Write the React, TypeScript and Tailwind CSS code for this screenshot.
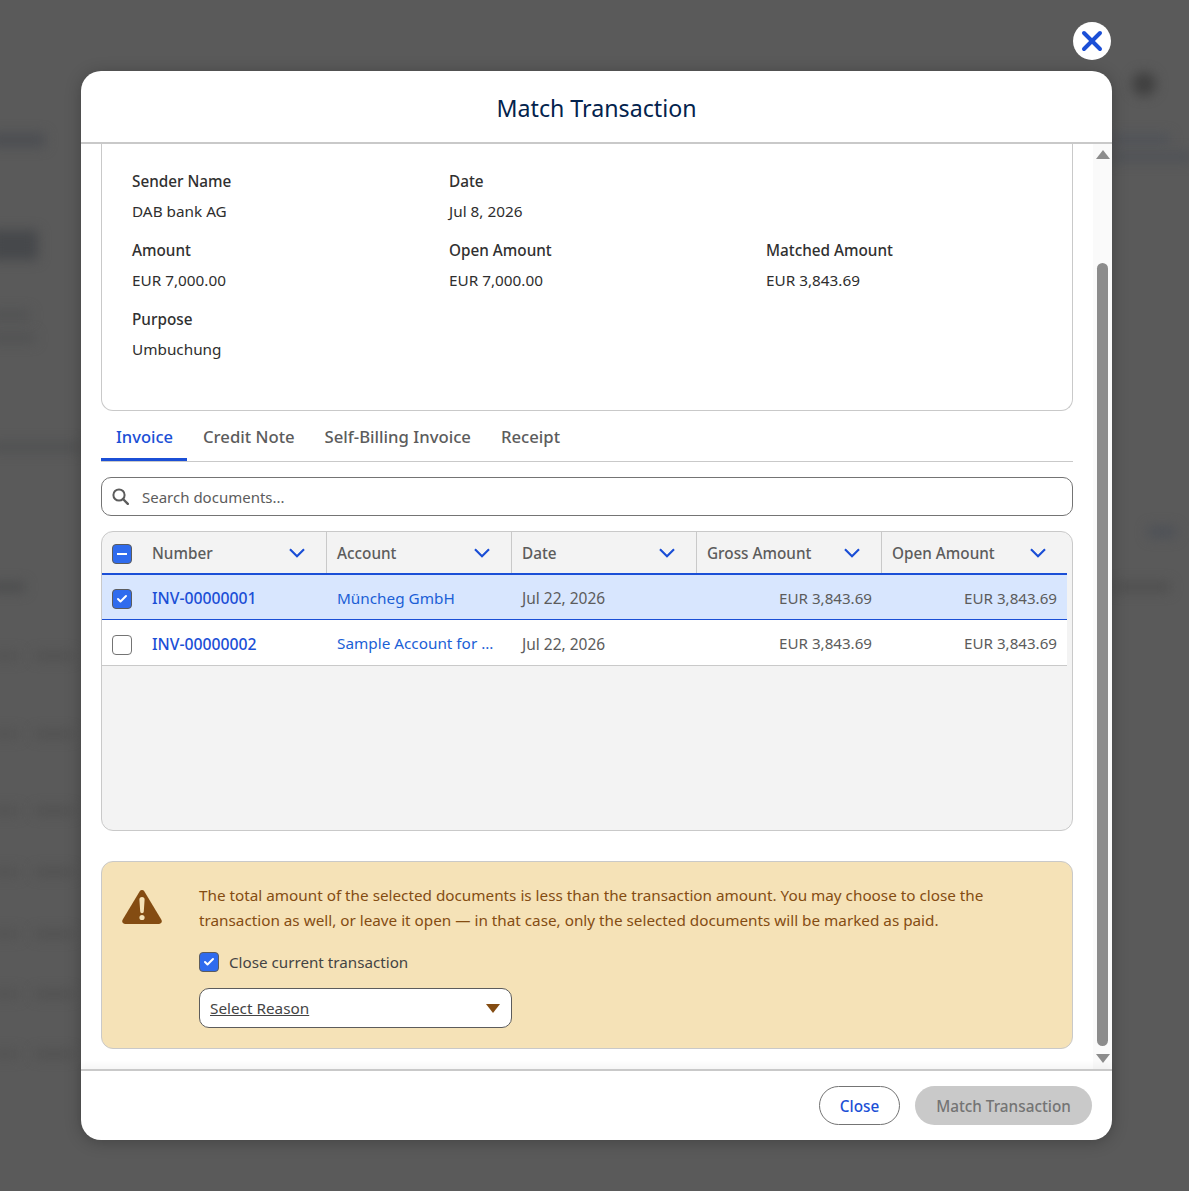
import React from "react";
import { Check, X } from "lucide-react";

const columns = [
  { label: "Number", width: "w-[225px]", first: true },
  { label: "Account", width: "w-[185px]" },
  { label: "Date", width: "w-[185px]" },
  { label: "Gross Amount", width: "w-[185px]" },
  { label: "Open Amount", width: "w-[185px]" },
];

// blurred page that sits behind the modal
const blobs = [
  "left-[-10px] top-[133px] w-[55px] h-[14px] bg-[#4c4e52]",
  "left-[-10px] top-[230px] w-[48px] h-[30px] bg-[#46484b]",
  "left-[-10px] top-[310px] w-[40px] h-[10px] bg-[#515253]",
  "left-[-10px] top-[333px] w-[45px] h-[10px] bg-[#515253]",
  "left-[-10px] top-[442px] w-[90px] h-[10px] bg-[#505152]",
  "left-[-10px] top-[582px] w-[35px] h-[10px] bg-[#4c4d4e]",
  "left-[-10px] top-[652px] w-[30px] h-[8px] bg-[#525252]",
  "left-[35px] top-[652px] w-[38px] h-[8px] bg-[#505050]",
  "left-[-10px] top-[730px] w-[30px] h-[8px] bg-[#525252]",
  "left-[35px] top-[730px] w-[38px] h-[8px] bg-[#505050]",
  "left-[-10px] top-[807px] w-[30px] h-[8px] bg-[#525252]",
  "left-[35px] top-[807px] w-[38px] h-[8px] bg-[#505050]",
  "left-[-10px] top-[868px] w-[30px] h-[8px] bg-[#525252]",
  "left-[35px] top-[868px] w-[38px] h-[8px] bg-[#505050]",
  "left-[-10px] top-[930px] w-[30px] h-[8px] bg-[#525252]",
  "left-[35px] top-[930px] w-[38px] h-[8px] bg-[#505050]",
  "left-[-10px] top-[990px] w-[30px] h-[8px] bg-[#525252]",
  "left-[35px] top-[990px] w-[38px] h-[8px] bg-[#505050]",
  "left-[-10px] top-[1050px] w-[30px] h-[8px] bg-[#525252]",
  "left-[35px] top-[1050px] w-[38px] h-[8px] bg-[#505050]",
  "left-[1132px] top-[72px] w-[24px] h-[24px] rounded-full bg-[#404040]",
  "left-[1112px] top-[134px] w-[58px] h-[10px] bg-[#505359]",
  "left-[1112px] top-[152px] w-[80px] h-[10px] bg-[#4f5257]",
  "left-[1148px] top-[526px] w-[28px] h-[12px] bg-[#4e5157]",
  "left-[1115px] top-[582px] w-[55px] h-[10px] bg-[#4f4f4f]",
];

function Checkbox({ checked, mixed }: { checked?: boolean; mixed?: boolean }) {
  const on = checked || mixed;
  return (
    <span
      className={`flex h-5 w-5 shrink-0 items-center justify-center rounded-[4px] border ${
        on ? "border-[#5c5c5c] bg-[#2f6bee]" : "border-[#747474] bg-white"
      }`}
    >
      {checked && <Check className="h-3 w-3 text-white" strokeWidth={4} />}
      {mixed && <span className="h-[2px] w-[10px] bg-white" />}
    </span>
  );
}

function Chevron() {
  return (
    <svg className="mr-[21px] h-[10px] w-[16px] text-[#1b4fd6]" viewBox="0 0 16 10" fill="none">
      <path d="M1 1.2 8 8.2 15 1.2" stroke="currentColor" strokeWidth="2.2" />
    </svg>
  );
}

function Field({ label, value }: { label: string; value: string }) {
  return (
    <div>
      <div className="text-[15.3px] font-medium leading-5 text-[#303030]">{label}</div>
      <div className="mt-[10px] text-[15.3px] leading-5 text-[#2e2e2e]">{value}</div>
    </div>
  );
}

function Row({
  number,
  account,
  selected,
}: {
  number: string;
  account: string;
  selected?: boolean;
}) {
  return (
    <div
      className={`flex items-center border-b ${
        selected ? "h-[45px] border-[#1b4fd6] bg-[#d8e6fe]" : "h-[46px] border-[#c9c9c9] bg-white"
      }`}
    >
      <div className="flex w-[225px] items-center pl-[10px] pt-[4px]">
        <Checkbox checked={selected} />
        <a className="ml-[20px] text-[15.75px] font-medium text-[#1b4fd6]">{number}</a>
      </div>
      <div className="w-[185px] truncate px-[10px] pt-[2px] text-[15.3px] text-[#1b5fd6]">{account}</div>
      <div className="w-[185px] px-[10px] pt-[4px] text-[15.5px] text-[#5c5c5c]">Jul 22, 2026</div>
      <div className="w-[185px] px-[10px] pt-[2px] text-right text-[15.15px] text-[#5c5c5c]">EUR 3,843.69</div>
      <div className="w-[185px] px-[10px] pt-[2px] text-right text-[15.15px] text-[#5c5c5c]">EUR 3,843.69</div>
    </div>
  );
}

export default function App() {
  return (
    <div className="relative min-h-[1191px] overflow-hidden bg-[#5a5a5a] pl-[81px] pt-[71px] font-['Noto_Sans',sans-serif]">
      {blobs.map((b) => (
        <div key={b} className={`absolute blur-[6px] ${b}`} />
      ))}
      <div className="relative flex h-[1069px] w-[1031px] flex-col rounded-[20px] bg-white shadow-[0_2px_16px_rgba(0,0,0,0.25)]">
        <button className="absolute right-[1px] top-[-49px] flex h-[38px] w-[38px] items-center justify-center rounded-full bg-white">
          <X className="h-[32px] w-[32px] text-[#1b4fd6]" strokeWidth={3} />
        </button>
        <header className="flex h-[73px] shrink-0 items-center justify-center border-b-2 border-[#c9c9c9] pt-[3px]">
          <h1 className="text-[23.2px] leading-8 text-[#03234d]">Match Transaction</h1>
        </header>

        <div className="flex min-h-0 flex-1">
          <main className="min-w-0 flex-1 pl-[20px] pr-[20px]">
            <section className="h-[267px] rounded-b-[12px] border border-t-0 border-[#c9c9c9] pl-[30px] pt-[27px]">
              <div className="grid grid-cols-[317px_317px_1fr] gap-y-[19px]">
                <Field label="Sender Name" value="DAB bank AG" />
                <Field label="Date" value="Jul 8, 2026" />
                <div />
                <Field label="Amount" value="EUR 7,000.00" />
                <Field label="Open Amount" value="EUR 7,000.00" />
                <Field label="Matched Amount" value="EUR 3,843.69" />
                <Field label="Purpose" value="Umbuchung" />
              </div>
            </section>

            <nav className="flex h-[51px] border-b border-[#c9c9c9]">
              <a className="flex h-[50px] items-center border-b-[3px] border-[#1b4fd6] pl-[15px] pr-[14px] pt-[6px] text-[16.5px] font-medium text-[#1b4fd6]">
                Invoice
              </a>
              <div className="ml-[1px] flex">
                {["Credit Note", "Self-Billing Invoice", "Receipt"].map((t) => (
                  <a key={t} className="flex h-[50px] items-center px-[15px] pt-[1px] text-[16.7px] font-medium text-[#5c5c5c]">
                    {t}
                  </a>
                ))}
              </div>
            </nav>

            <div className="mt-[15px] flex h-[39px] items-center rounded-[10px] border border-[#747474] pl-[10px]">
              <svg className="h-[17px] w-[17px] text-[#5c5c5c]" viewBox="0 0 17 17" fill="none">
                <circle cx="7" cy="7" r="5.6" stroke="currentColor" strokeWidth="2" />
                <path d="M11 11 15.8 15.8" stroke="currentColor" strokeWidth="2.4" strokeLinecap="round" />
              </svg>
              <span className="ml-[13px] pt-[2px] text-[15px] text-[#5c5c5c]">Search documents...</span>
            </div>

            <div className="mt-[15px] h-[300px] overflow-hidden rounded-[12px] border border-[#c9c9c9] bg-[#f3f3f3]">
              <div className="pr-[5px]">
                <div className="flex h-[43px] border-b-2 border-[#1b4fd6]">
                  {columns.map((c, i) => (
                    <div
                      key={c.label}
                      className={`flex items-center pl-[10px] text-[15.3px] font-medium text-[#5c5c5c] ${c.width} ${
                        i < 4 ? "border-r border-[#c9c9c9]" : ""
                      }`}
                    >
                      {c.first && (
                        <span className="mr-[20px] mt-[3px]">
                          <Checkbox mixed />
                        </span>
                      )}
                      <span className="flex-1 pt-[2px]">{c.label}</span>
                      <Chevron />
                    </div>
                  ))}
                </div>
                <Row number="INV-00000001" account="Müncheg GmbH" selected />
                <Row number="INV-00000002" account="Sample Account for ..." />
              </div>
            </div>

            <section className="mt-[30px] flex h-[188px] rounded-[12px] border border-[#c9c9c9] bg-[#f5e2b7] pt-[21px]">
              <div className="w-[97px] pl-[20px] pt-[7px]">
                <svg className="h-[34px] w-[40px]" viewBox="0 0 40 34">
                  <path
                    d="M17.6 1.4a2.8 2.8 0 0 1 4.8 0l17 28.4a2.8 2.8 0 0 1-2.4 4.2H3a2.8 2.8 0 0 1-2.4-4.2z"
                    fill="#844c12"
                  />
                  <path d="M17.4 9.5a2.6 2.6 0 0 1 5.2 0l-.8 12a1.8 1.8 0 0 1-3.6 0z" fill="#f5e2b7" />
                  <circle cx="20" cy="27.5" r="2.6" fill="#f5e2b7" />
                </svg>
              </div>
              <div>
                <p className="w-[820px] text-[15.27px] leading-[25px] text-[#844c12]">
                  The total amount of the selected documents is less than the transaction amount. You may choose to
                  close the
                  <br />
                  transaction as well, or leave it open — in that case, only the selected documents will be marked as
                  paid.
                </p>
                <label className="mt-[19px] flex items-center gap-[10px] text-[15.2px] leading-5 text-[#444]">
                  <Checkbox checked />
                  Close current transaction
                </label>
                <div className="mt-[16px] flex h-[40px] w-[313px] items-center justify-between rounded-[10px] border border-[#5c5c5c] bg-white px-[10px]">
                  <span className="text-[15.3px] text-[#444] underline">Select Reason</span>
                  <span className="mr-[1px] h-0 w-0 border-x-[7px] border-t-[9px] border-x-transparent border-t-[#844c12]" />
                </div>
              </div>
            </section>
          </main>

          <aside className="flex w-[19px] shrink-0 flex-col items-center bg-[#fafafa] pb-[6px] pt-[6px]">
            <span className="h-0 w-0 border-x-[7px] border-b-[9px] border-x-transparent border-b-[#8c8c8c]" />
            <span className="mt-[104px] w-[11px] flex-1 rounded-full bg-[#8c8c8c]" />
            <span className="mt-[8px] h-0 w-0 border-x-[7px] border-t-[9px] border-x-transparent border-t-[#8c8c8c]" />
          </aside>
        </div>

        <footer className="flex h-[71px] shrink-0 items-center justify-end gap-[15px] rounded-b-[20px] border-t-2 border-[#c9c9c9] pr-[20px] shadow-[0_-4px_6px_rgba(0,0,0,0.04)]">
          <button className="h-[39px] w-[81px] rounded-full border border-[#747474] pt-[2px] text-[15.3px] font-medium text-[#1b4fd6]">
            Close
          </button>
          <button className="h-[39px] w-[177px] rounded-full bg-[#c9c9c9] pt-[2px] text-[15.3px] font-medium text-[#747474]">
            Match Transaction
          </button>
        </footer>
      </div>
    </div>
  );
}
